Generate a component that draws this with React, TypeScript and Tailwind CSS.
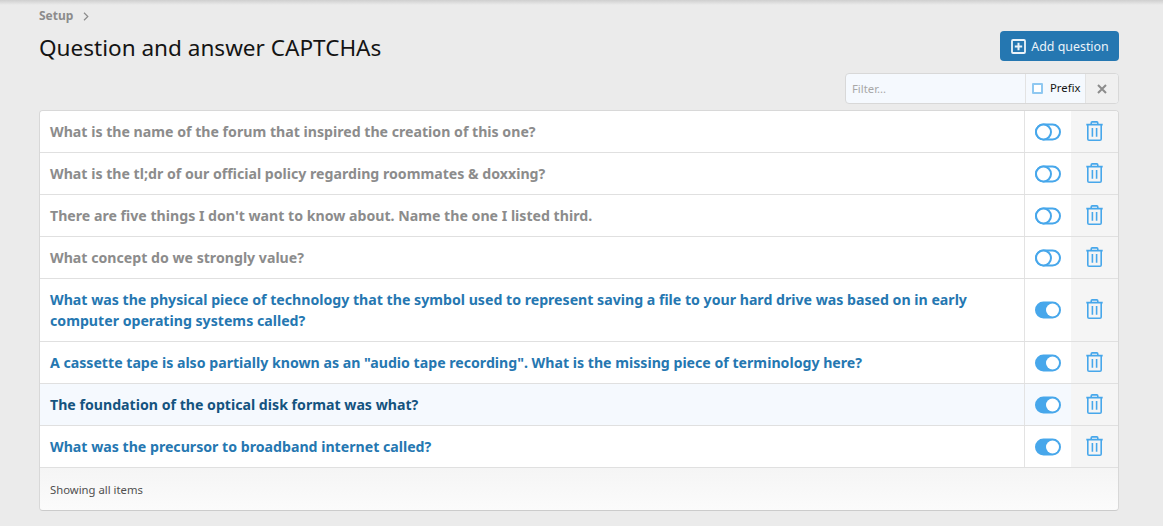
const questions = [
  { text: 'What is the name of the forum that inspired the creation of this one?', on: false },
  { text: 'What is the tl;dr of our official policy regarding roommates & doxxing?', on: false },
  { text: "There are five things I don't want to know about. Name the one I listed third.", on: false },
  { text: 'What concept do we strongly value?', on: false },
  {
    text: 'What was the physical piece of technology that the symbol used to represent saving a file to your hard drive was based on in early computer operating systems called?',
    on: true,
  },
  { text: 'A cassette tape is also partially known as an "audio tape recording". What is the missing piece of terminology here?', on: true },
  { text: 'The foundation of the optical disk format was what?', on: true, hover: true },
  { text: 'What was the precursor to broadband internet called?', on: true },
];

const Toggle = ({ on }: { on: boolean }) => (
  <svg width="26" height="18" viewBox="0 0 26 18" fill="none">
    {on ? (
      <>
        <rect x="0" y="0.5" width="26" height="17" rx="8.5" fill="#47a7eb" />
        <circle cx="17.5" cy="9" r="6.5" fill="#fff" />
      </>
    ) : (
      <>
        <rect x="1" y="1.5" width="24" height="15" rx="7.5" stroke="#47a7eb" strokeWidth="2" />
        <circle cx="8.5" cy="9" r="7.5" stroke="#47a7eb" strokeWidth="2" fill="#fff" />
      </>
    )}
  </svg>
);

const Trash = () => (
  <svg className="mb-[2px]" width="17" height="20" viewBox="0 0 17 20" fill="none" stroke="#47a7eb" strokeWidth="1.6">
    <path d="M0.3 3.6h16.4" />
    <path d="M5.2 3.6V1.9c0-.6.4-1 1-1h4.6c.6 0 1 .4 1 1v1.7" />
    <path d="M1.8 3.6v14.3c0 .7.6 1.3 1.3 1.3h10.8c.7 0 1.3-.6 1.3-1.3V3.6" />
    <path d="M6.4 7v8.8M10.6 7v8.8" />
  </svg>
);

const Row = ({ text, on, hover }: { text: string; on: boolean; hover?: boolean }) => (
  <div className={`flex border-b border-[#e0e0e0] ${hover ? 'bg-[#f5f9fe]' : 'bg-white'}`}>
    <div
      className={`flex-1 px-[10px] py-[10px] text-[14.15px] leading-[21px] font-bold ${
        hover ? 'text-[#14537f]' : on ? 'text-[#2577b1]' : 'text-[#8c8c8c]'
      }`}
    >
      {text}
    </div>
    <div className="flex w-[47px] items-center justify-center border-l border-[#e3e3e3]">
      <Toggle on={on} />
    </div>
    <div className="flex w-[47px] items-center justify-center bg-[#f5f5f5]">
      <Trash />
    </div>
  </div>
);

export default function App() {
  return (
    <div className="relative h-[526px] overflow-hidden bg-[#ebebeb] pr-[44px] pl-[39px] font-['Noto_Sans','Open_Sans',sans-serif] text-[#141414]">
      <div className="absolute inset-x-0 top-0 h-[5px] bg-gradient-to-b from-[#cfcfcf] to-[#ebebeb]" />
      <div className="flex items-center gap-[10px] pt-[8px] text-[12px] leading-[16px] font-bold text-[#8c8c8c]">
        <span>Setup</span>
        <svg width="6" height="9" viewBox="0 0 6 9" fill="none" stroke="#8c8c8c" strokeWidth="1.2">
          <path d="M1 .8l3.8 3.7L1 8.2" />
        </svg>
      </div>
      <div className="flex items-start justify-between">
        <h1 className="pt-[8px] text-[22.55px] leading-[32px] font-normal">Question and answer CAPTCHAs</h1>
        <button className="mt-[7px] flex h-[30px] w-[119px] items-center justify-center gap-[5px] rounded-[4px] bg-[#2577b1] pl-[1px] text-[12.4px] text-[#ebf3f9]">
          <svg width="15" height="15" viewBox="0 0 15 15" fill="none" stroke="#ebf3f9" strokeWidth="1.8">
            <rect x="1" y="1" width="13" height="13" rx="1" />
            <path d="M7.5 3.8v7.4M3.8 7.5h7.4" strokeWidth="2" />
          </svg>
          <span className="pt-[2px]">Add question</span>
        </button>
      </div>
      <div className="mt-[9px] flex justify-end">
        <div className="flex h-[31px] w-[274px] overflow-hidden rounded-[4px] border border-[#d8d8d8] bg-[#f5f9fe] text-[11.3px]">
          <div className="flex w-[179px] items-center px-[6px] pt-[1px] text-[#a8a8a8]">Filter...</div>
          <div className="flex w-[60px] items-center gap-[7px] border-l border-[#e3e3e3] pl-[6px] text-[#141414]">
            <span className="h-[11px] w-[11px] rounded-[1px] border-2 border-[#8fc8f1] bg-white" />
            Prefix
          </div>
          <div className="flex flex-1 items-center justify-center border-l border-[#e3e3e3] bg-[#f0f0f0]">
            <svg width="10" height="10" viewBox="0 0 10 10" stroke="#8c8c8c" strokeWidth="2">
              <path d="M1 1l8 8M9 1l-8 8" />
            </svg>
          </div>
        </div>
      </div>
      <div className="mt-[6px] overflow-hidden rounded-[4px] border border-[#d8d8d8] border-b-[#cbcbcb]">
        {questions.map((q) => (
          <Row key={q.text} text={q.text} on={q.on} hover={q.hover} />
        ))}
        <div className="h-[42px] bg-gradient-to-b from-[#f5f5f5] to-[#fbfbfb] px-[10px] pt-[14px] text-[11.3px] leading-[16px] text-[#505050]">
          Showing all items
        </div>
      </div>
    </div>
  );
}
